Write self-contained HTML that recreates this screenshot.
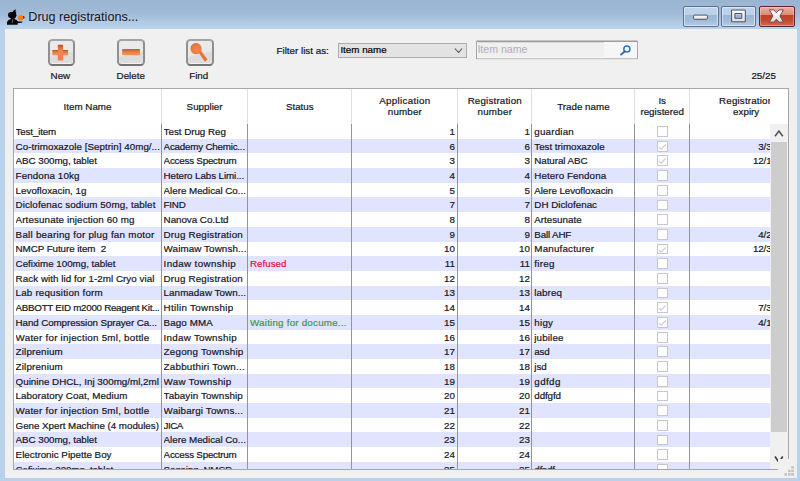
<!DOCTYPE html>
<html lang="en"><head><meta charset="utf-8"><title>Drug registrations...</title>
<style>
*{box-sizing:border-box;margin:0;padding:0}
html,body{width:800px;height:481px;overflow:hidden}
body{position:relative;font-family:"Liberation Sans",sans-serif;font-size:9.8px;color:#14141e;-webkit-text-stroke:0.2px;
 background:#b9d1ea;}
.abs{position:absolute}
#titlebar{left:0;top:0;width:800px;height:30px;background:linear-gradient(#99b4d1 0px,#a1bad7 14px,#b0c9e4 22px,#b9d1ea 27px)}
#title{left:28.3px;top:9.3px;font-size:12.6px;line-height:16px;color:#1a1a2a;white-space:pre;-webkit-text-stroke:0.1px;text-shadow:0 0 3px rgba(255,255,255,.5)}
#client{left:5px;top:29px;width:792px;height:448.5px;background:#f0f0f0}
.wb{top:6.3px;height:20.3px;border-radius:2px;border:1px solid #5d7190;box-shadow:inset 0 0 0 1px rgba(225,236,248,.7);
 background:linear-gradient(#c1d5ec 0,#bad0e9 42%,#9cb6d6 44%,#a2bbda 70%,#b4cbe6 100%)}
#wclose{border-color:#5a2636;background:linear-gradient(#eab0a0 0,#dc8a76 42%,#bf4226 44%,#c24a2e 70%,#d06a50 100%);box-shadow:inset 0 0 0 1px rgba(255,220,210,.4)}
.lbl{white-space:pre;line-height:12px;margin-top:0.9px}
.tbtn{width:27.5px;height:27.4px;top:39px;border-radius:4.5px;border:2px solid;border-color:#a4a4a4 #8e8e8e #747474 #909090;
 background:linear-gradient(166deg,#ececec 0,#e8e8e8 52%,#dbdbdb 60%,#dfdfdf 100%);box-shadow:inset 0 -1px 0 rgba(255,255,255,.6)}
#table{left:13px;top:88px;width:776px;height:381.7px;background:#fff;border:1px solid #a6a6aa;overflow:hidden}
.row{left:0;width:760px;height:14.69px}
.alt{background:#e0e4ff}
.c{position:absolute;white-space:pre;line-height:14.69px;top:0.9px;height:14.69px;overflow:hidden}
.r{text-align:right}
.hsep{top:0;width:1px;height:35px;background:#dedede}
.bsep{top:35px;width:1px;height:350px;background:#949494}
.hd{text-align:center;line-height:10.4px;white-space:pre}
.cb{position:absolute;width:10.8px;height:10.8px;border:1px solid #c6c6c6;background:#fff;top:2.1px}
</style></head>
<body>
<div id="titlebar" class="abs"></div>
<svg class="abs" style="left:4px;top:6px" width="24" height="22" viewBox="0 0 24 22">
<path d="M3.0 18.7 L3.0 16.4 L3.6 15.0 L5.0 13.7 L6.7 13.2 L6.9 12.3 L4.6 11.2 L3.9 9.0 L4.6 6.9 L6.6 6.0 L8.6 6.0 L9.6 4.6 L12.1 3.2 L11.4 5.4 L12.4 6.4 L11.9 7.4 L12.6 9.2 L11.8 11.4 L10.4 12.4 L10.7 13.2 L12.4 13.8 L13.5 15.0 L14.0 15.6 L18.3 15.5 L18.3 16.5 L13.7 17.3 L13.7 18.7 Z" fill="#050505"/>
<ellipse cx="19.6" cy="11.4" rx="0.9" ry="1.3" fill="#3a1a08"/>
<circle cx="16.7" cy="11.65" r="2.7" fill="#ff7c10"/>
<path d="M8.6 13.0 L9.4 13.6 L8.2 17.6 L7.6 16.8 Z" fill="#bbb" opacity=".6"/>
</svg>
<div id="title" class="abs">Drug registrations...</div>
<div class="abs wb" style="left:683.3px;width:35.3px"></div>
<div class="abs wb" style="left:721.3px;width:35.2px"></div>
<div class="abs wb" id="wclose" style="left:758.9px;width:35.8px"></div>
<svg class="abs" style="left:680px;top:0px" width="120" height="30" viewBox="680 0 120 30">
<defs><linearGradient id="wg" x1="0" y1="0" x2="0" y2="1"><stop offset="0" stop-color="#ffffff"/><stop offset="1" stop-color="#dedede"/></linearGradient></defs>
<rect x="693.6" y="15.1" width="13.8" height="4.2" rx="1" fill="url(#wg)" stroke="#4c5062" stroke-width="1"/>
<path d="M731.6 10 H745.3 V21.8 H731.6 Z M734.9 13.5 V18.3 H741.8 V13.5 Z" fill="url(#wg)" fill-rule="evenodd" stroke="#4c5062" stroke-width="1" stroke-linejoin="round"/>
<path d="M769.4 9.9 L773.7 9.9 L776.4 12.7 L779.1 9.9 L783.4 9.9 L779.9 16 L783.4 22.1 L779.1 22.1 L776.4 19.2 L773.7 22.1 L769.4 22.1 L772.9 16 Z" fill="url(#wg)" stroke="#6e4c54" stroke-width="1" stroke-linejoin="round"/>
</svg>
<div id="client" class="abs"></div>
<div class="abs tbtn" style="left:47.6px"></div>
<div class="abs tbtn" style="left:117.3px"></div>
<div class="abs tbtn" style="left:186.2px"></div>
<svg class="abs" style="left:40px;top:36px" width="190" height="34" viewBox="40 36 190 34">
<defs>
<linearGradient id="og" x1="0" y1="0" x2="0" y2="1"><stop offset="0" stop-color="#a8501f"/><stop offset=".3" stop-color="#e2733a"/><stop offset=".7" stop-color="#f2884f"/><stop offset="1" stop-color="#f48c54"/></linearGradient>
<linearGradient id="ov" x1="0" y1="0" x2="0" y2="1"><stop offset="0" stop-color="#a8501f"/><stop offset=".18" stop-color="#e2733a"/><stop offset=".5" stop-color="#f2884f"/><stop offset="1" stop-color="#ee7e46"/></linearGradient>
<radialGradient id="oc" cx=".6" cy=".65" r=".75"><stop offset="0" stop-color="#f2884f"/><stop offset=".7" stop-color="#ea7a40"/><stop offset="1" stop-color="#b85626"/></radialGradient>
</defs>
<rect x="52.3" y="50" width="15.8" height="5.2" fill="url(#og)"/>
<rect x="57.8" y="44.8" width="5.3" height="15.6" fill="url(#ov)"/>
<rect x="58.3" y="50.6" width="4.3" height="4" fill="#f0864d"/>
<rect x="122.2" y="49.1" width="17.7" height="6" fill="url(#og)"/>
<path d="M198.6 52.6 L200.8 50.6 L207.6 59.4 L204.8 61.8 Z" fill="#e2743c"/>
<circle cx="196.1" cy="48.7" r="5.6" fill="url(#oc)"/>
</svg>
<div class="abs lbl" style="left:50.6px;top:69.5px">New</div>
<div class="abs lbl" style="left:116.6px;top:69.5px">Delete</div>
<div class="abs lbl" style="left:189.2px;top:69.5px">Find</div>
<div class="abs lbl" style="left:276.5px;top:44.6px">Filter list as:</div>
<div class="abs" style="left:338px;top:43px;width:129px;height:14.8px;background:#e3e3e3;border:1px solid #adadad"></div>
<div class="abs lbl" style="left:340.4px;top:43.3px;color:#000">Item name</div>
<svg class="abs" style="left:452px;top:46px" width="12" height="9" viewBox="0 0 12 9"><path d="M2.9 2.5 L6.5 6.5 L10.1 2.5" fill="none" stroke="#505050" stroke-width="1.1"/></svg>
<div class="abs" style="left:476px;top:40px;width:162px;height:20px;border-radius:1.5px;background:linear-gradient(#c4c4c4 0,#c4c4c4 1px,#9d9d9d 1px,#9d9d9d 2px,#d9d9d9 2px,#d9d9d9 3px,#f0f0f0 3px,#f0f0f0 17px,#fafafa 17px,#fafafa 18px,#c2c2c2 18px,#c2c2c2 19px,#e6e6e6 19px)"></div>
<div class="abs" style="left:476px;top:41px;width:1px;height:18px;background:#a4a4a4"></div>
<div class="abs" style="left:477px;top:42px;width:1px;height:16px;background:#f8f8f8"></div>
<div class="abs" style="left:637px;top:41px;width:1px;height:18px;background:#a9a9a9"></div>
<div class="abs" style="left:604px;top:42px;width:33px;height:16px;background:#f6f6f6"></div>
<div class="abs lbl" style="left:477.4px;top:42.3px;color:#b4acbc;font-size:10.6px;-webkit-text-stroke:0">Item name</div>
<svg class="abs" style="left:618px;top:43px" width="16" height="14" viewBox="0 0 16 14">
<circle cx="8.9" cy="6.0" r="3.1" fill="none" stroke="#2f74bd" stroke-width="1.5"/>
<path d="M6.8 8.3 L3.0 11.6" stroke="#2a5fa8" stroke-width="1.7" stroke-linecap="round"/>
</svg>
<div class="abs lbl" style="left:751.4px;top:69.6px">25/25</div>
<div id="table" class="abs"><div class="row abs" style="top:35.00px"><div class="c " style="left:1.60px;width:145.20px;letter-spacing:-0.160px;">Test_item</div><div class="c " style="left:149.60px;width:83.40px;letter-spacing:-0.025px;">Test Drug Reg</div><div class="c r" style="left:346.00px;width:94.90px;">1</div><div class="c r" style="left:451.00px;width:64.90px;">1</div><div class="c " style="left:520.30px;width:99.70px;letter-spacing:0.195px;">guardian</div><div class="cb" style="left:643.10px"></div></div>
<div class="row abs alt" style="top:49.69px"><div class="c " style="left:1.60px;width:145.20px;letter-spacing:0.033px;">Co-trimoxazole [Septrin] 40mg/...</div><div class="c " style="left:149.60px;width:83.40px;letter-spacing:-0.214px;">Academy Chemic...</div><div class="c r" style="left:346.00px;width:94.90px;">6</div><div class="c r" style="left:451.00px;width:64.90px;">6</div><div class="c " style="left:520.30px;width:99.70px;letter-spacing:-0.030px;">Test trimoxazole</div><div class="cb" style="left:643.10px"><svg width="9" height="9" viewBox="0 0 9 9" style="position:absolute;left:0;top:0"><path d="M1.1 5.2 L3.1 7.2 L7.8 2.4" fill="none" stroke="#cdcdcd" stroke-width="1.25"/></svg></div><div class="c r" style="left:686.00px;width:95.60px;letter-spacing:-0.1px">3/3/2017</div></div>
<div class="row abs" style="top:64.38px"><div class="c " style="left:1.60px;width:145.20px;letter-spacing:-0.055px;">ABC 300mg, tablet</div><div class="c " style="left:149.60px;width:83.40px;letter-spacing:-0.222px;">Access Spectrum</div><div class="c r" style="left:346.00px;width:94.90px;">3</div><div class="c r" style="left:451.00px;width:64.90px;">3</div><div class="c " style="left:520.30px;width:99.70px;letter-spacing:-0.057px;">Natural ABC</div><div class="cb" style="left:643.10px"><svg width="9" height="9" viewBox="0 0 9 9" style="position:absolute;left:0;top:0"><path d="M1.1 5.2 L3.1 7.2 L7.8 2.4" fill="none" stroke="#cdcdcd" stroke-width="1.25"/></svg></div><div class="c r" style="left:686.00px;width:95.60px;letter-spacing:-0.1px">12/1/2017</div></div>
<div class="row abs alt" style="top:79.07px"><div class="c " style="left:1.60px;width:145.20px;letter-spacing:0.104px;">Fendona 10kg</div><div class="c " style="left:149.60px;width:83.40px;letter-spacing:-0.091px;">Hetero Labs Limi...</div><div class="c r" style="left:346.00px;width:94.90px;">4</div><div class="c r" style="left:451.00px;width:64.90px;">4</div><div class="c " style="left:520.30px;width:99.70px;letter-spacing:0.078px;">Hetero Fendona</div><div class="cb" style="left:643.10px"></div></div>
<div class="row abs" style="top:93.76px"><div class="c " style="left:1.60px;width:145.20px;letter-spacing:0.005px;">Levofloxacin, 1g</div><div class="c " style="left:149.60px;width:83.40px;letter-spacing:-0.025px;">Alere Medical Co...</div><div class="c r" style="left:346.00px;width:94.90px;">5</div><div class="c r" style="left:451.00px;width:64.90px;">5</div><div class="c " style="left:520.30px;width:99.70px;letter-spacing:-0.076px;">Alere Levofloxacin</div><div class="cb" style="left:643.10px"></div></div>
<div class="row abs alt" style="top:108.45px"><div class="c " style="left:1.60px;width:145.20px;letter-spacing:0.107px;">Diclofenac sodium 50mg, tablet</div><div class="c " style="left:149.60px;width:83.40px;letter-spacing:-0.240px;">FIND</div><div class="c r" style="left:346.00px;width:94.90px;">7</div><div class="c r" style="left:451.00px;width:64.90px;">7</div><div class="c " style="left:520.30px;width:99.70px;letter-spacing:0.006px;">DH Diclofenac</div><div class="cb" style="left:643.10px"></div></div>
<div class="row abs" style="top:123.14px"><div class="c " style="left:1.60px;width:145.20px;letter-spacing:0.112px;">Artesunate injection 60 mg</div><div class="c " style="left:149.60px;width:83.40px;letter-spacing:-0.035px;">Nanova Co.Ltd</div><div class="c r" style="left:346.00px;width:94.90px;">8</div><div class="c r" style="left:451.00px;width:64.90px;">8</div><div class="c " style="left:520.30px;width:99.70px;letter-spacing:-0.009px;">Artesunate</div><div class="cb" style="left:643.10px"></div></div>
<div class="row abs alt" style="top:137.83px"><div class="c " style="left:1.60px;width:145.20px;letter-spacing:0.247px;">Ball bearing for plug fan motor</div><div class="c " style="left:149.60px;width:83.40px;letter-spacing:0.180px;">Drug Registration</div><div class="c r" style="left:346.00px;width:94.90px;">9</div><div class="c r" style="left:451.00px;width:64.90px;">9</div><div class="c " style="left:520.30px;width:99.70px;letter-spacing:-0.153px;">Ball AHF</div><div class="cb" style="left:643.10px"></div><div class="c r" style="left:686.00px;width:95.60px;letter-spacing:-0.1px">4/2/2017</div></div>
<div class="row abs" style="top:152.52px"><div class="c " style="left:1.60px;width:145.20px;letter-spacing:-0.070px;">NMCP Future item&nbsp; 2</div><div class="c " style="left:149.60px;width:83.40px;letter-spacing:0.111px;">Waimaw Townsh...</div><div class="c r" style="left:346.00px;width:94.90px;">10</div><div class="c r" style="left:451.00px;width:64.90px;">10</div><div class="c " style="left:520.30px;width:99.70px;letter-spacing:0.180px;">Manufacturer</div><div class="cb" style="left:643.10px"><svg width="9" height="9" viewBox="0 0 9 9" style="position:absolute;left:0;top:0"><path d="M1.1 5.2 L3.1 7.2 L7.8 2.4" fill="none" stroke="#cdcdcd" stroke-width="1.25"/></svg></div><div class="c r" style="left:686.00px;width:95.60px;letter-spacing:-0.1px">12/3/2017</div></div>
<div class="row abs alt" style="top:167.21px"><div class="c " style="left:1.60px;width:145.20px;letter-spacing:-0.014px;">Cefixime 100mg, tablet</div><div class="c " style="left:149.60px;width:83.40px;letter-spacing:0.355px;">Indaw township</div><div class="c " style="left:236.00px;width:101.00px;color:#e6123c;">Refused</div><div class="c r" style="left:346.00px;width:94.90px;">11</div><div class="c r" style="left:451.00px;width:64.90px;">11</div><div class="c " style="left:520.30px;width:99.70px;letter-spacing:0.247px;">fireg</div><div class="cb" style="left:643.10px"></div></div>
<div class="row abs" style="top:181.90px"><div class="c " style="left:1.60px;width:145.20px;letter-spacing:0.051px;">Rack with lid for 1-2ml Cryo vial</div><div class="c " style="left:149.60px;width:83.40px;letter-spacing:0.180px;">Drug Registration</div><div class="c r" style="left:346.00px;width:94.90px;">12</div><div class="c r" style="left:451.00px;width:64.90px;">12</div><div class="cb" style="left:643.10px"></div></div>
<div class="row abs alt" style="top:196.59px"><div class="c " style="left:1.60px;width:145.20px;letter-spacing:0.180px;">Lab requsition form</div><div class="c " style="left:149.60px;width:83.40px;letter-spacing:0.062px;">Lanmadaw Town...</div><div class="c r" style="left:346.00px;width:94.90px;">13</div><div class="c r" style="left:451.00px;width:64.90px;">13</div><div class="c " style="left:520.30px;width:99.70px;letter-spacing:0.078px;">labreq</div><div class="cb" style="left:643.10px"></div></div>
<div class="row abs" style="top:211.28px"><div class="c " style="left:1.60px;width:145.20px;letter-spacing:-0.288px;">ABBOTT EID m2000 Reagent Kit...</div><div class="c " style="left:149.60px;width:83.40px;letter-spacing:0.315px;">Htilin Township</div><div class="c r" style="left:346.00px;width:94.90px;">14</div><div class="c r" style="left:451.00px;width:64.90px;">14</div><div class="cb" style="left:643.10px"><svg width="9" height="9" viewBox="0 0 9 9" style="position:absolute;left:0;top:0"><path d="M1.1 5.2 L3.1 7.2 L7.8 2.4" fill="none" stroke="#cdcdcd" stroke-width="1.25"/></svg></div><div class="c r" style="left:686.00px;width:95.60px;letter-spacing:-0.1px">7/3/2017</div></div>
<div class="row abs alt" style="top:225.97px"><div class="c " style="left:1.60px;width:145.20px;letter-spacing:-0.100px;">Hand Compression Sprayer Ca...</div><div class="c " style="left:149.60px;width:83.40px;letter-spacing:0.104px;">Bago MMA</div><div class="c " style="left:236.00px;width:101.00px;color:#3c9a3c;letter-spacing:.21px">Waiting for docume...</div><div class="c r" style="left:346.00px;width:94.90px;">15</div><div class="c r" style="left:451.00px;width:64.90px;">15</div><div class="c " style="left:520.30px;width:99.70px;letter-spacing:0.229px;">higy</div><div class="cb" style="left:643.10px"><svg width="9" height="9" viewBox="0 0 9 9" style="position:absolute;left:0;top:0"><path d="M1.1 5.2 L3.1 7.2 L7.8 2.4" fill="none" stroke="#cdcdcd" stroke-width="1.25"/></svg></div><div class="c r" style="left:686.00px;width:95.60px;letter-spacing:-0.1px">4/1/2017</div></div>
<div class="row abs" style="top:240.66px"><div class="c " style="left:1.60px;width:145.20px;letter-spacing:0.238px;">Water for injection 5ml, bottle</div><div class="c " style="left:149.60px;width:83.40px;letter-spacing:0.269px;">Indaw Township</div><div class="c r" style="left:346.00px;width:94.90px;">16</div><div class="c r" style="left:451.00px;width:64.90px;">16</div><div class="c " style="left:520.30px;width:99.70px;letter-spacing:0.139px;">jubilee</div><div class="cb" style="left:643.10px"></div></div>
<div class="row abs alt" style="top:255.35px"><div class="c " style="left:1.60px;width:145.20px;letter-spacing:0.157px;">Zilprenium</div><div class="c " style="left:149.60px;width:83.40px;letter-spacing:0.218px;">Zegong Township</div><div class="c r" style="left:346.00px;width:94.90px;">17</div><div class="c r" style="left:451.00px;width:64.90px;">17</div><div class="c " style="left:520.30px;width:99.70px;letter-spacing:-0.166px;">asd</div><div class="cb" style="left:643.10px"></div></div>
<div class="row abs" style="top:270.04px"><div class="c " style="left:1.60px;width:145.20px;letter-spacing:0.157px;">Zilprenium</div><div class="c " style="left:149.60px;width:83.40px;letter-spacing:0.230px;">Zabbuthiri Town...</div><div class="c r" style="left:346.00px;width:94.90px;">18</div><div class="c r" style="left:451.00px;width:64.90px;">18</div><div class="c " style="left:520.30px;width:99.70px;letter-spacing:-0.077px;">jsd</div><div class="cb" style="left:643.10px"></div></div>
<div class="row abs alt" style="top:284.73px"><div class="c " style="left:1.60px;width:145.20px;letter-spacing:0.003px;">Quinine DHCL, Inj 300mg/ml,2ml</div><div class="c " style="left:149.60px;width:83.40px;letter-spacing:0.259px;">Waw Township</div><div class="c r" style="left:346.00px;width:94.90px;">19</div><div class="c r" style="left:451.00px;width:64.90px;">19</div><div class="c " style="left:520.30px;width:99.70px;letter-spacing:0.400px;">gdfdg</div><div class="cb" style="left:643.10px"></div></div>
<div class="row abs" style="top:299.42px"><div class="c " style="left:1.60px;width:145.20px;letter-spacing:0.059px;">Laboratory Coat, Medium</div><div class="c " style="left:149.60px;width:83.40px;letter-spacing:0.134px;">Tabayin Township</div><div class="c r" style="left:346.00px;width:94.90px;">20</div><div class="c r" style="left:451.00px;width:64.90px;">20</div><div class="c " style="left:520.30px;width:99.70px;letter-spacing:-0.12px;">ddfgfd</div><div class="cb" style="left:643.10px"></div></div>
<div class="row abs alt" style="top:314.11px"><div class="c " style="left:1.60px;width:145.20px;letter-spacing:0.238px;">Water for injection 5ml, bottle</div><div class="c " style="left:149.60px;width:83.40px;letter-spacing:0.160px;">Waibargi Towns...</div><div class="c r" style="left:346.00px;width:94.90px;">21</div><div class="c r" style="left:451.00px;width:64.90px;">21</div><div class="cb" style="left:643.10px"></div></div>
<div class="row abs" style="top:328.80px"><div class="c " style="left:1.60px;width:145.20px;letter-spacing:-0.034px;">Gene Xpert Machine (4 modules)</div><div class="c " style="left:149.60px;width:83.40px;letter-spacing:-0.500px;">JICA</div><div class="c r" style="left:346.00px;width:94.90px;">22</div><div class="c r" style="left:451.00px;width:64.90px;">22</div><div class="cb" style="left:643.10px"></div></div>
<div class="row abs alt" style="top:343.49px"><div class="c " style="left:1.60px;width:145.20px;letter-spacing:-0.055px;">ABC 300mg, tablet</div><div class="c " style="left:149.60px;width:83.40px;letter-spacing:-0.025px;">Alere Medical Co...</div><div class="c r" style="left:346.00px;width:94.90px;">23</div><div class="c r" style="left:451.00px;width:64.90px;">23</div><div class="cb" style="left:643.10px"></div></div>
<div class="row abs" style="top:358.18px"><div class="c " style="left:1.60px;width:145.20px;letter-spacing:0.003px;">Electronic Pipette Boy</div><div class="c " style="left:149.60px;width:83.40px;letter-spacing:-0.222px;">Access Spectrum</div><div class="c r" style="left:346.00px;width:94.90px;">24</div><div class="c r" style="left:451.00px;width:64.90px;">24</div><div class="cb" style="left:643.10px"></div></div>
<div class="row abs alt" style="top:372.87px"><div class="c " style="left:1.60px;width:145.20px;letter-spacing:-0.12px;">Cefixime 200mg, tablet</div><div class="c " style="left:149.60px;width:83.40px;letter-spacing:-0.196px;">Sagaing_NMCP</div><div class="c r" style="left:346.00px;width:94.90px;">25</div><div class="c r" style="left:451.00px;width:64.90px;">25</div><div class="c " style="left:520.30px;width:99.70px;letter-spacing:-0.12px;">dfsdf</div><div class="cb" style="left:643.10px"></div></div>
<div class="abs hsep" style="left:146.80px"></div>
<div class="abs bsep" style="left:146.80px"></div>
<div class="abs hsep" style="left:233.00px"></div>
<div class="abs bsep" style="left:233.00px"></div>
<div class="abs hsep" style="left:337.00px"></div>
<div class="abs bsep" style="left:337.00px"></div>
<div class="abs hsep" style="left:443.25px"></div>
<div class="abs bsep" style="left:443.25px"></div>
<div class="abs hsep" style="left:517.00px"></div>
<div class="abs bsep" style="left:517.00px"></div>
<div class="abs hsep" style="left:620.20px"></div>
<div class="abs bsep" style="left:620.20px"></div>
<div class="abs hsep" style="left:674.80px"></div>
<div class="abs bsep" style="left:674.80px"></div>
<div class="abs hd" style="left:13.50px;width:120px;top:12.60px">Item Name</div>
<div class="abs hd" style="left:130.60px;width:120px;top:12.60px">Supplier</div>
<div class="abs hd" style="left:225.80px;width:120px;top:12.60px">Status</div>
<div class="abs hd" style="left:330.90px;width:120px;top:7.40px"><span style="letter-spacing:.3px">Application</span><br><span style="letter-spacing:.15px">number</span></div>
<div class="abs hd" style="left:420.80px;width:120px;top:7.40px"><span style="letter-spacing:.17px">Registration</span><br><span style="letter-spacing:.25px">number</span></div>
<div class="abs hd" style="left:509.40px;width:120px;top:12.60px">Trade name</div>
<div class="abs hd" style="left:588.20px;width:120px;top:7.40px">Is<br>registered</div>
<div class="abs hd" style="left:672.20px;width:120px;top:7.40px"><span style="letter-spacing:.17px">Registration</span><br>expiry</div>
<div class="abs" style="left:756.30px;top:0;width:20px;height:35.40px;background:#fff"></div>
<div class="abs" style="left:756.30px;top:35.40px;width:18px;height:346px;background:#f0f0f0"></div>
<div class="abs" style="left:757.40px;top:53.20px;width:16px;height:289.40px;background:#cdcdcd"></div>
<svg class="abs" style="left:759.00px;top:38.00px" width="12" height="12" viewBox="0 0 12 12"><path d="M2.0 9.2 L5.9 4.0 L9.8 9.2" fill="none" stroke="#505050" stroke-width="1.5"/></svg>
<svg class="abs" style="left:759.00px;top:364.00px" width="12" height="12" viewBox="0 0 12 12"><path d="M2.0 3.6 L5.9 9.2 L9.8 3.6" fill="none" stroke="#404040" stroke-width="1.7"/></svg></div>
<div class="abs" style="left:778.3px;top:458.8px;width:18.5px;height:18.6px;background:#f0f0f0"></div>
<svg class="abs" style="left:780px;top:462px" width="18" height="16" viewBox="780 462 18 16" fill="#c4c4c4">
<rect x="791.2" y="466.2" width="2.8" height="2.5"/>
<rect x="788" y="469.8" width="2.6" height="2.4"/><rect x="791.2" y="469.8" width="2.8" height="2.4"/>
<rect x="784.4" y="473.1" width="2.6" height="2.6"/><rect x="788" y="473.1" width="2.6" height="2.6"/><rect x="791.2" y="473.1" width="2.8" height="2.6"/></svg>
</body></html>
